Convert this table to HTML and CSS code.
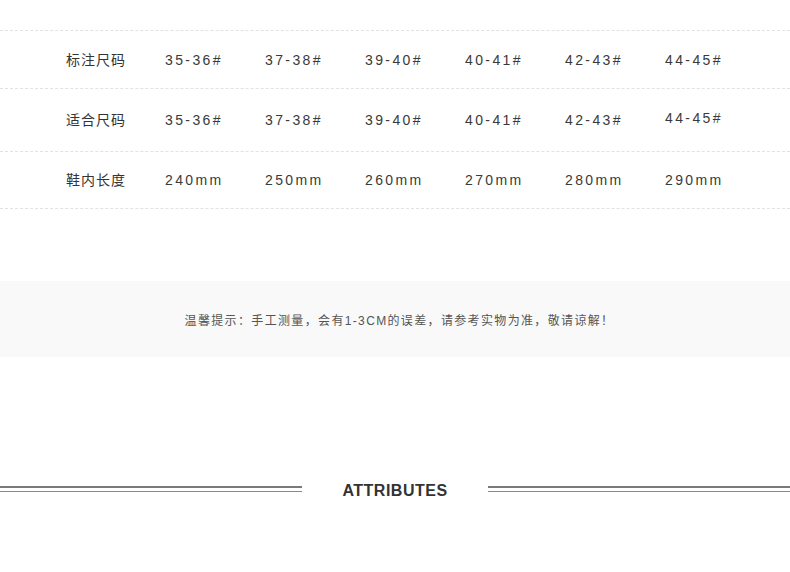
FILE: index.html
```html
<!DOCTYPE html>
<html lang="zh">
<head>
<meta charset="utf-8">
<title>尺码表</title>
<link rel="stylesheet" href="styles.css">
</head>
<body>
<div class="page">
  <div class="size-table">
    <div class="row row-1">
      <div class="label">标注尺码</div>
      <div class="cell">35-36#</div>
      <div class="cell">37-38#</div>
      <div class="cell">39-40#</div>
      <div class="cell">40-41#</div>
      <div class="cell">42-43#</div>
      <div class="cell">44-45#</div>
    </div>
    <div class="row row-2">
      <div class="label">适合尺码</div>
      <div class="cell">35-36#</div>
      <div class="cell">37-38#</div>
      <div class="cell">39-40#</div>
      <div class="cell">40-41#</div>
      <div class="cell">42-43#</div>
      <div class="cell cell-up">44-45#</div>
    </div>
    <div class="row row-3">
      <div class="label">鞋内长度</div>
      <div class="cell">240mm</div>
      <div class="cell">250mm</div>
      <div class="cell">260mm</div>
      <div class="cell">270mm</div>
      <div class="cell">280mm</div>
      <div class="cell">290mm</div>
    </div>
  </div>

  <div class="notice">温馨提示：手工测量，会有1-3CM的误差，请参考实物为准，敬请谅解！</div>

  <div class="section-title">
    <div class="rule rule-left"></div>
    <div class="title">ATTRIBUTES</div>
    <div class="rule rule-right"></div>
  </div>
</div>
</body>
</html>
```

FILE: styles.css
```css
html, body {
  margin: 0;
  padding: 0;
  background: #ffffff;
}

.page {
  width: 790px;
  font-family: "Liberation Sans", "Noto Sans CJK SC", sans-serif;
}

.size-table {
  padding-top: 30px;
}

.row {
  display: flex;
  align-items: center;
  border-top: 1px dashed #e2e2e2;
  box-sizing: border-box;
}

.row-1 { height: 58px; }
.row-2 { height: 63px; }
.row-3 {
  height: 58px;
  border-bottom: 1px dashed #e2e2e2;
}

.label {
  width: 99px;
  padding-left: 66px;
  font-family: "Noto Sans CJK SC", sans-serif;
  font-size: 14px;
  letter-spacing: 1px;
  color: #333333;
  position: relative;
  top: -1px;
}

.cell {
  width: 100px;
  font-size: 14px;
  letter-spacing: 2.4px;
  color: #3a3a3a;
}

.cell-up {
  position: relative;
  top: -2px;
}

.notice {
  margin-top: 72px;
  height: 76px;
  padding-left: 9px;
  background: #f9f9f9;
  display: flex;
  align-items: center;
  justify-content: center;
  font-family: "Liberation Sans", "Noto Sans CJK SC", sans-serif;
  font-size: 12px;
  letter-spacing: 1.35px;
  color: #555555;
}

.section-title {
  margin-top: 123px;
  display: flex;
  align-items: center;
  height: 20px;
}

.rule {
  height: 2px;
  border-bottom: 1px solid #8a8a8a;
  background: #7a7a7a;
  background-clip: content-box;
  padding-bottom: 3px;
  box-sizing: content-box;
  position: relative;
  top: -1px;
}

.rule-left {
  width: 302px;
}

.rule-right {
  flex: 1;
}

.title {
  width: 186px;
  text-align: center;
  font-size: 16px;
  font-weight: bold;
  letter-spacing: 0.5px;
  color: #333333;
  position: relative;
  top: 1px;
}
```
